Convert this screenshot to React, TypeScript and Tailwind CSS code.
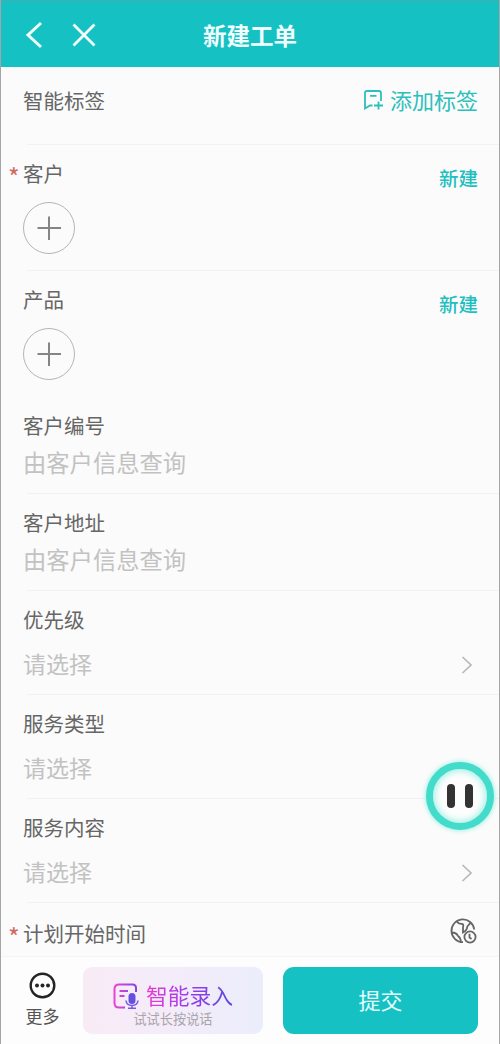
import React from "react";

interface SelectRowProps {
  label: string;
  height: string;
  hideArrow?: boolean;
}

const Label: React.FC<{ text: string; required?: boolean }> = ({ text, required }) => (
  <div className="relative text-[20.5px] leading-[30px] text-[#666]">
    {required && (
      <span className="absolute -left-[15px] top-[3px] text-[25px] leading-[30px] text-[#cf6a62]">*</span>
    )}
    {text}
  </div>
);

const PickerRow: React.FC<{ label: string; required?: boolean }> = ({ label, required }) => (
  <div className="ml-[22px] mr-[21px] h-[126px] pt-[14px]">
    <div className="flex justify-between">
      <Label text={label} required={required} />
      <button className="mt-[5px] h-[30px] text-[19.5px] leading-[30px] font-medium text-[#1fbfc0]">新建</button>
    </div>
    <button className="mt-[9px] block size-[52px] rounded-full border border-[#b5b5b5]">
      <svg className="size-[50px]" viewBox="0 0 50 50" stroke="#858585" strokeWidth="2">
        <path d="M13.5 25H37M25 13.5V37" />
      </svg>
    </button>
  </div>
);

const QueryRow: React.FC<{ label: string }> = ({ label }) => (
  <div className="ml-[22px] h-[97px] pt-[14px]">
    <Label text={label} />
    <p className="mt-[5px] text-[23.3px] leading-[34px] text-[#c2c2c2]">由客户信息查询</p>
  </div>
);

const SelectRow: React.FC<SelectRowProps> = ({ label, height, hideArrow }) => (
  <div className={`ml-[22px] mr-[21px] pt-[14px] ${height}`}>
    <Label text={label} />
    <div className="mt-[12px] flex items-center justify-between text-[23px] leading-[34px] text-[#c2c2c2]">
      请选择
      {!hideArrow && (
        <svg className="mr-[5px] mt-[3px] h-[18px] w-[12px]" viewBox="0 0 12 18" fill="none" stroke="#b8b8b8" strokeWidth="1.7">
          <path d="M1.5 1L10 9L1.5 17" />
        </svg>
      )}
    </div>
  </div>
);

const Divider: React.FC = () => <div className="-mb-px ml-[26px] h-px bg-[#f1f1f1]" />;

const App: React.FC = () => {
  return (
    <div className="relative flex h-[1044px] w-[500px] flex-col overflow-hidden border-x border-[#a5a5a5] bg-[#fbfbfb] font-['Noto_Sans_CJK_SC',sans-serif]">
      {/* Header */}
      <header className="grid h-[67px] shrink-0 grid-cols-[1fr_auto_1fr] items-center border-t border-[#45aeb0] bg-[#15c1c2] pt-px">
        <div className="flex items-center pl-[24px]">
          <svg className="h-[28px] w-[18px]" viewBox="0 0 18 28" fill="none" stroke="#f3ffff" strokeWidth="3">
            <path d="M16 2L3 14L16 26" />
          </svg>
          <svg className="ml-[29px] size-[24px]" viewBox="0 0 24 24" fill="none" stroke="#f3ffff" strokeWidth="2.8">
            <path d="M1.5 1.5L22.5 22.5M22.5 1.5L1.5 22.5" />
          </svg>
        </div>
        <h1 className="text-[23.5px] font-bold leading-[36px] text-[#f0ffff]">新建工单</h1>
      </header>

      {/* Form */}
      <main className="h-[889px] shrink-0">
        <div className="ml-[22px] mr-[21px] flex h-[77px] justify-between pt-[18px]">
          <Label text="智能标签" />
          <button className="-mt-px flex h-[30px] items-center text-[22px] leading-[30px] text-[#2cc0bb]">
            <svg className="mr-[6px] mt-[2px] size-[20px]" viewBox="0 0 20 20" fill="none" stroke="currentColor" strokeWidth="1.8">
              <path d="M17 11V3Q17 1 15 1H3Q1 1 1 3V18.5L6 15.5H8.5M6 5.8H12.5M10 15.5H19M14.5 11.5V19.5" />
            </svg>
            添加标签
          </button>
        </div>
        <Divider />
        <PickerRow label="客户" required />
        <Divider />
        <PickerRow label="产品" />
        <QueryRow label="客户编号" />
        <Divider />
        <QueryRow label="客户地址" />
        <Divider />
        <SelectRow label="优先级" height="h-[104px]" />
        <Divider />
        {/* arrow sits under the floating button */}
        <SelectRow label="服务类型" height="h-[104px]" hideArrow />
        <Divider />
        <SelectRow label="服务内容" height="h-[104px]" />
        <Divider />
        <div className="ml-[22px] mr-[22px] flex justify-between pt-[16px]">
          <Label text="计划开始时间" required />
          <svg className="size-[27px]" viewBox="0 0 27 27" fill="none" stroke="#666" strokeWidth="1.8">
            <path d="M13 24.2A11.4 11.4 0 1 1 24.2 11.5" />
            <path d="M7 3.5Q8.5 6.2 12 5.8Q14 6.3 13 9V14.5Q17 12.5 17.3 8.5L20.5 4.8M1.5 14.5Q6.5 14.5 8 18Q10.5 19.5 11 24" />
            <circle cx="20" cy="19" r="5.6" />
            <path d="M19.5 15.8V19.5L21.5 21" />
          </svg>
        </div>
      </main>

      {/* Bottom bar */}
      <footer className="flex h-[88px] shrink-0 items-start border-t border-[#f4f4f4] bg-[#fdfdfd] pt-[10px]">
        <button className="ml-[24px] flex w-[35px] flex-col items-center pt-[5px] text-[17px] leading-[26px] text-[#555]">
          <svg className="size-[27px]" viewBox="0 0 27 27" fill="none" stroke="#242424" strokeWidth="2.4">
            <circle cx="13.5" cy="13.5" r="11.8" />
            <g fill="#242424" stroke="none">
              <circle cx="8" cy="13.5" r="2" />
              <circle cx="13.5" cy="13.5" r="2" />
              <circle cx="19" cy="13.5" r="2" />
            </g>
          </svg>
          <span className="mt-[4px] whitespace-nowrap">更多</span>
        </button>
        <button className="ml-[23px] flex h-[67px] w-[180px] flex-col items-center rounded-[9px] bg-gradient-to-r from-[#f8ebf6] via-[#f4ecfa] to-[#ebedfb] pt-[14px]">
          <div className="flex h-[30px] items-center justify-center">
            <svg className="mr-[7px] size-[26px]" viewBox="0 0 26 26" fill="none" strokeWidth="2">
              <defs>
                <linearGradient id="note" x1="0" y1="0" x2="26" y2="0" gradientUnits="userSpaceOnUse">
                  <stop stopColor="#ee45d2" />
                  <stop offset="1" stopColor="#7548df" />
                </linearGradient>
              </defs>
              <path d="M23 9V5Q23 1.5 19.5 1.5H6Q1.5 1.5 1.5 6V20Q1.5 24.5 6 24.5H12M6.5 8H15M6.5 13H11.5" stroke="url(#note)" />
              <rect x="15.5" y="10" width="7" height="11" rx="3.5" fill="#6650df" />
              <path d="M13 17.5Q13.5 22.5 19 22.5Q24.5 22.5 25 17.5M19 22.5V25.5M15 25.2H23" stroke="#7658e6" strokeWidth="1.5" />
            </svg>
            <span className="mb-[3px] bg-gradient-to-r from-[#ee35d2] via-[#9838ec] to-[#5548dc] bg-clip-text text-[21.8px] leading-[32px] text-transparent">智能录入</span>
          </div>
          <p className="-mt-px text-[13.2px] leading-[18px] text-[#aaa5a9]">试试长按说话</p>
        </button>
        <button className="ml-[20px] h-[67px] w-[195px] rounded-[11px] bg-[#15c1c2] pb-[3px] text-[22px] text-[#e5ffff]">提交</button>
      </footer>

      {/* Floating pause button */}
      <button className="absolute left-[425px] top-[762px] flex size-[68px] items-center justify-center gap-[10px] rounded-full border-[7px] border-[#43dbc9] bg-[#fdfdfd] shadow-[0_0_4px_1px_#a5f1e8,inset_0_0_6px_2px_#a5f1e8]">
        <span className="h-[24px] w-[8px] rounded-full bg-[#333]" />
        <span className="h-[24px] w-[8px] rounded-full bg-[#333]" />
      </button>
    </div>
  );
};

export default App;
